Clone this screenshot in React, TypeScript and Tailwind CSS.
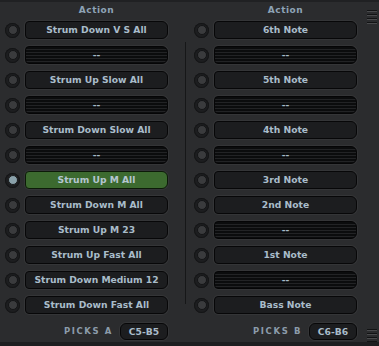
import React from 'react'

const left = [
  'Strum Down V S All', '--', 'Strum Up Slow All', '--', 'Strum Down Slow All', '--',
  'Strum Up M All', 'Strum Down M All', 'Strum Up M 23', 'Strum Up Fast All',
  'Strum Down Medium 12', 'Strum Down Fast All',
]
const right = [
  '6th Note', '--', '5th Note', '--', '4th Note', '--',
  '3rd Note', '2nd Note', '--', '1st Note', '--', 'Bass Note',
]

function Row({ label, active }: { label: string; active?: boolean }) {
  const empty = label === '--'
  let btn = 'bg-[#1c1d1f] border-[#070708]'
  if (empty) btn = 'bg-[repeating-linear-gradient(180deg,#0b0c0d_0px,#0b0c0d_2px,#222325_2px,#222325_3px)] border-[#050506]'
  if (active) btn = 'bg-[#3c6a2f] border-[#0c1a08]'
  return (
    <div className="flex items-center h-[18px] mb-[7px]">
      <div className="w-[25px] flex justify-center">
        <div className="w-[15px] h-[15px] rounded-full bg-[#1e1f21] flex items-center justify-center shadow-[inset_0_0_2px_#000]">
          <div className={`w-[10px] h-[10px] rounded-full border ${active ? 'bg-[#8aa1aa] border-[#1a1b1c]' : 'bg-[#3a3b3d] border-[#141516]'}`} />
        </div>
      </div>
      <div className={`w-[143px] h-[18px] rounded-l-[4px] rounded-r-[6px] border-[1.5px] ${btn} shadow-[0_0_0_1px_#343537] flex items-center justify-center`}>
        <span className={`font-['DejaVu_Sans',sans-serif] font-bold text-[9.2px] leading-none ${active ? 'text-[#b4c6d0]' : 'text-[#a9bcca]'}`}>
          {label}
        </span>
      </div>
    </div>
  )
}

function Stripes() {
  return (
    <div className="flex flex-col gap-[2px] w-[10px]">
      {[0, 1, 2, 3].map((i) => (
        <div key={i} className="h-[2px] bg-[#121314] border-b border-[#4a4b4d]" />
      ))}
    </div>
  )
}

function Column({ items, picks, range, activeIdx }: { items: string[]; picks: string; range: string; activeIdx?: number }) {
  return (
    <div className="w-[185px] flex flex-col">
      <div className="h-[19px] pt-[2px] pl-[25px]">
        <div className="w-[143px] text-center font-['DejaVu_Sans',sans-serif] font-bold text-[9px] tracking-[0.5px] text-[#8ea3b6]">Action</div>
      </div>
      {items.map((it, i) => (
        <Row key={i} label={it} active={i === activeIdx} />
      ))}
      <div className="flex items-center justify-end w-[168px] mt-[2px] gap-[7px]">
        <span className="font-['DejaVu_Sans',sans-serif] font-bold text-[8.5px] tracking-[1.6px] text-[#8c9cab]">{picks}</span>
        <div className="w-[48px] h-[17px] rounded-[6px] border-[1.5px] border-[#070708] bg-[#1c1d1f] shadow-[0_0_0_1px_#343537] flex items-center justify-center">
          <span className="font-['DejaVu_Sans',sans-serif] font-bold text-[9.2px] text-[#a9bcca]">{range}</span>
        </div>
      </div>
    </div>
  )
}

export default function App() {
  return (
    <div className="w-[379px] h-[346px] bg-[#2b2c2e] relative overflow-hidden">
      <div className="h-[2px] bg-[#202123]" />
      <div className="flex">
        <Column items={left} picks="PICKS A" range="C5-B5" activeIdx={6} />
        <div className="w-[1px] bg-[#161718] mt-[40px] h-[262px]" />
        <div className="w-[3px]" />
        <Column items={right} picks="PICKS B" range="C6-B6" />
      </div>
      <div className="absolute right-[2px] top-[10px]"><Stripes /></div>
      <div className="absolute right-[2px] top-[329px]"><Stripes /></div>
      <div className="absolute left-0 right-0 bottom-0 h-[4px] bg-[#1d1e20]" />
    </div>
  )
}
